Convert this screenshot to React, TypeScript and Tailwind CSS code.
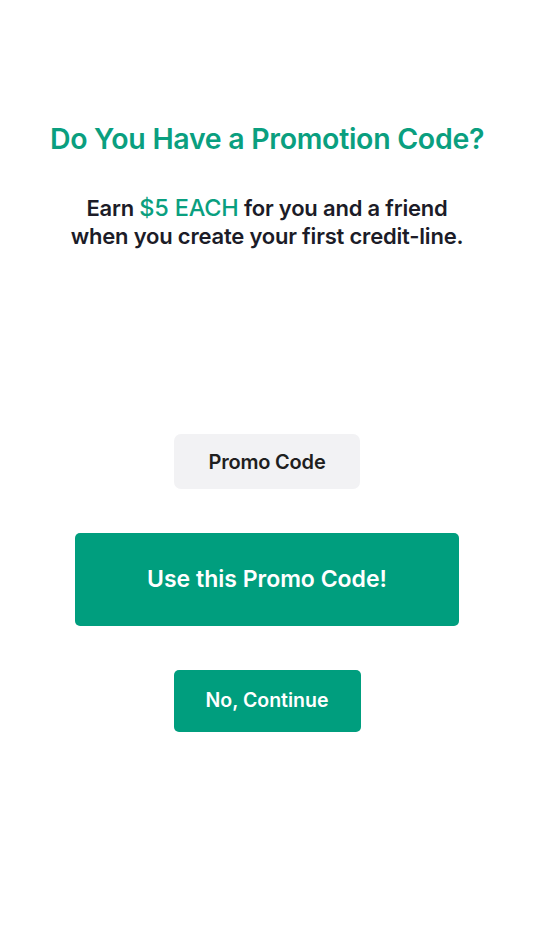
export default function App() {
  return (
    <div className="w-[534px] h-[950px] bg-white flex flex-col items-center" style={{ fontFamily: 'Inter, "Noto Sans", sans-serif' }}>
      <h1 className="mt-[120px] text-[28.5px] leading-[38px] font-semibold text-[#0a9f7f] tracking-[-0.3px]">Do You Have a Promotion Code?</h1>
      <p className="mt-[36px] text-center text-[22px] leading-[28px] font-semibold text-[#1c1c28] tracking-[-0.2px]">
        Earn <span className="text-[#0a9f7f] font-medium text-[23.5px]">$5 EACH</span> for you and a friend
        <br />
        when you create your first credit-line.
      </p>
      <div className="mt-[184px] w-[186px] h-[55px] rounded-[7px] bg-[#f2f2f4] flex items-center justify-center text-[20px] font-semibold text-[#1f1f1f] tracking-[-0.2px]">
        Promo Code
      </div>
      <button className="mt-[44px] w-[384px] h-[93px] rounded-[5px] bg-[#009e7e] text-white text-[23px] font-semibold flex items-center justify-center">
        Use this Promo Code!
      </button>
      <button className="mt-[44px] w-[187px] h-[62px] rounded-[5px] bg-[#009e7e] text-white text-[19.5px] font-semibold flex items-center justify-center">
        No, Continue
      </button>
    </div>
  );
}
